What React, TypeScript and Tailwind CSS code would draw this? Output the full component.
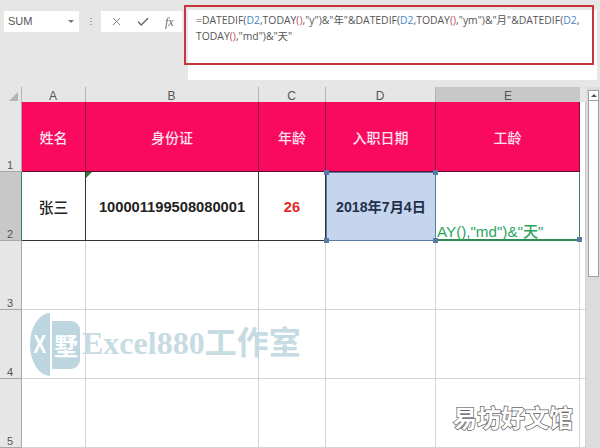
import { Check, X } from "lucide-react";
import type { ReactNode } from "react";

const HEADER_CELL =
  "flex items-center justify-center bg-[#f90a5f] border-r border-b border-r-[#8a1240] border-b-[#5c1030] pt-[3px] text-[14px] font-medium text-[#fde3ee]";
const BLANK_CELL = "border-r border-b border-[#d4d4d4] bg-white";
const DATA_CELL =
  "relative flex items-center justify-center border-r border-b border-[#333333] bg-white pt-[2px] text-[14.7px] font-bold text-[#222222]";
const COL_HEAD =
  "flex items-center justify-center border-r border-[#b4b4b4] bg-[#e6e6e6] pt-[2px] pr-px text-[12px] leading-none text-[#555555]";
const ROW_HEAD =
  "flex items-end justify-center border-r border-b border-[#a8a8a8] bg-[#e6e6e6] pr-px text-[11px] leading-none text-[#555555]";

function Ref({ children }: { children: ReactNode }) {
  return <span className="text-[#4a86c5]">{children}</span>;
}

function Paren() {
  return <span className="text-[#b8505a]">()</span>;
}

function Handle({ className }: { className: string }) {
  return <span className={`absolute z-10 h-[5px] w-[5px] bg-[#5a7aa6] ${className}`} />;
}

function FormulaBar() {
  return (
    <div className="relative flex h-[87px] shrink-0 items-start bg-[#e6e6e6] pl-1 pt-[11px]">
      <div className="flex h-[21px] w-[75px] items-center justify-between bg-white pl-[4px] pr-[5px] text-[11px] text-[#555555]">
        SUM
        <span className="h-0 w-0 border-x-[3px] border-t-[3px] border-x-transparent border-t-[#777777]" />
      </div>
      <div className="ml-[10px] flex h-[21px] w-[4px] flex-col items-center justify-center gap-[2px]">
        <span className="h-px w-[2px] bg-[#aaaaaa]" />
        <span className="h-px w-[2px] bg-[#aaaaaa]" />
        <span className="h-px w-[2px] bg-[#aaaaaa]" />
      </div>
      <div className="ml-[8px] flex h-[21px] w-[81px] items-center bg-white pl-[9px] text-[#6a6a6a]">
        <X size={13} strokeWidth={1.5} />
        <Check size={14} strokeWidth={2.5} className="ml-[13px]" />
        <span className="ml-[15px] font-['Liberation_Serif',serif] text-[12px] italic">fx</span>
      </div>
      <div className="absolute left-[188px] right-[3px] top-[10px] h-[70px] bg-white pl-[8px] pt-[2px] font-['Open_Sans','Noto_Sans_CJK_SC',sans-serif] text-[10.4px] leading-[16px] text-[#555555]">
        <div className="whitespace-nowrap">
          =DATEDIF(<Ref>D2</Ref>,TODAY<Paren />,"y")&amp;"年"&amp;DATEDIF(<Ref>D2</Ref>,TODAY<Paren />,"ym")&amp;"月"&amp;DATEDIF(<Ref>D2</Ref>,
        </div>
        <div className="whitespace-nowrap">
          TODAY<Paren />,"md")&amp;"天"
        </div>
      </div>
      <div className="absolute left-[184px] top-[5px] h-[60px] w-[410px] border-2 border-[#c8363c]" />
    </div>
  );
}

function Watermark() {
  return (
    <div className="absolute left-[30px] top-[226px] flex items-center">
      <div className="flex h-[63px] w-[20px] items-center justify-center rounded-[100%_0_0_100%/50%_0_0_50%] bg-[#bcd5df] text-[26px] font-bold text-white">
        <span className="scale-x-75">X</span>
      </div>
      <div className="ml-[2px] flex h-[48px] w-[28px] items-center justify-center rounded-r-[9px] bg-[#bcd5df] font-['Noto_Sans_CJK_SC',sans-serif] text-[24px] font-bold leading-none text-white">
        墅
      </div>
      <span className="mb-[3px] ml-[2px] whitespace-nowrap font-['Liberation_Serif','Noto_Sans_CJK_SC',serif] text-[32px] font-bold leading-none text-[#c7dbe3]">
        Excel880工作室
      </span>
    </div>
  );
}

function Grid() {
  return (
    <div className="relative grid h-[361px] w-[586px] shrink-0 grid-cols-[22px_64px_173px_67px_110px_144px_6px] grid-rows-[15px_70px_69px_69px_69px_69px]">
      <div className="relative border-r border-[#b4b4b4] bg-[#e6e6e6]">
        <span className="absolute bottom-[1px] right-[3px] h-0 w-0 border-b-[9px] border-l-[9px] border-b-[#b4b4b4] border-l-transparent" />
      </div>
      <div className={COL_HEAD}>A</div>
      <div className={COL_HEAD}>B</div>
      <div className={COL_HEAD}>C</div>
      <div className={COL_HEAD}>D</div>
      <div className="flex items-center justify-center bg-[#c8c8c8] pt-[2px] text-[12px] leading-none text-[#555555]">E</div>
      <div className="bg-[#e6e6e6]" />

      <div className={ROW_HEAD}>1</div>
      <div className={HEADER_CELL}>姓名</div>
      <div className={HEADER_CELL}>身份证</div>
      <div className={HEADER_CELL}>年龄</div>
      <div className={HEADER_CELL}>入职日期</div>
      <div className={HEADER_CELL}>工龄</div>
      <div className="border-r border-[#c8c8c8] bg-white" />

      <div className="flex items-end justify-center border-r border-b border-r-[#2f8a55] border-b-[#a8a8a8] bg-[#c8c8c8] pr-px text-[11px] leading-none text-[#555555]">2</div>
      <div className={`${DATA_CELL} font-['Noto_Sans_CJK_SC',sans-serif] font-medium`}>张三</div>
      <div className={DATA_CELL}>
        <span className="absolute left-0 top-0 h-0 w-0 border-r-[6px] border-t-[6px] border-r-transparent border-t-[#2f7a3f]" />
        100001199508080001
      </div>
      <div className={`${DATA_CELL} text-[#e02b2b]`}>26</div>
      <div className="relative flex items-center justify-center border border-[#5a7aa6] bg-[#c5d5ee] pt-[2px] text-[14.2px] font-bold text-[#24304a]">
        2018年7月4日
        <Handle className="-left-[3px] -top-[3px]" />
        <Handle className="-right-[3px] -top-[3px]" />
        <Handle className="-bottom-[3px] -left-[3px]" />
        <Handle className="-bottom-[3px] -right-[3px]" />
      </div>
      <div className="relative flex items-end overflow-visible border-r border-b-2 border-[#2f8a55] bg-white pl-px text-[15.2px] font-medium leading-[15px] text-[#2ba55f]">
        <span className="whitespace-nowrap">AY(),"md")&amp;"天"</span>
        <Handle className="-bottom-[3px] -right-[3px]" />
      </div>
      <div className="border-r border-[#c8c8c8] bg-white" />

      {["3", "4", "5"].map((row) => (
        <div key={row} className="contents">
          <div className={ROW_HEAD}>{row}</div>
          <div className={BLANK_CELL} />
          <div className={BLANK_CELL} />
          <div className={BLANK_CELL} />
          <div className={BLANK_CELL} />
          <div className={BLANK_CELL} />
          <div className="border-r border-b border-[#d4d4d4] bg-white" />
        </div>
      ))}

      <Watermark />
      <span className="absolute left-[453px] top-[318px] whitespace-nowrap font-['Noto_Sans_CJK_SC',sans-serif] text-[24px] font-bold leading-none text-white [-webkit-text-stroke:1.5px_#666666] [paint-order:stroke_fill]">
        易坊好文馆
      </span>
    </div>
  );
}

function ScrollBar() {
  return (
    <div className="h-[361px] w-[14px] bg-[#dcdcdc] pl-[2px] pr-px pt-[3px]">
      <div className="flex h-[187px] flex-col border border-[#a0a0a0] bg-white">
        <div className="flex h-[10px] items-center justify-center border-b border-[#a0a0a0]">
          <span className="h-0 w-0 border-x-[3px] border-b-[3px] border-x-transparent border-b-[#555555]" />
        </div>
      </div>
    </div>
  );
}

export default function App() {
  return (
    <div className="flex h-[448px] w-[600px] flex-col overflow-hidden bg-[#e6e6e6] font-['Liberation_Sans','Noto_Sans_CJK_SC',sans-serif]">
      <FormulaBar />
      <div className="flex">
        <Grid />
        <ScrollBar />
      </div>
    </div>
  );
}
